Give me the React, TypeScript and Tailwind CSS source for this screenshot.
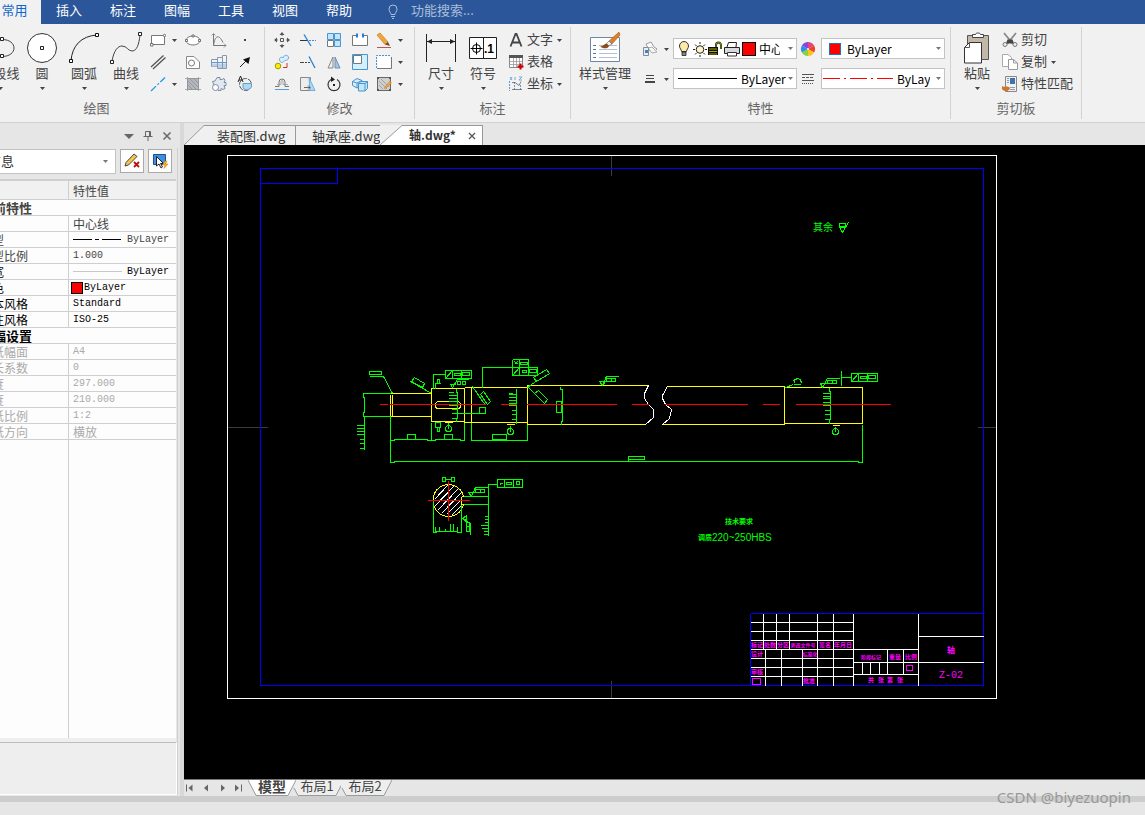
import type { ReactNode } from "react"

const menus = ["常用", "插入", "标注", "图幅", "工具", "视图", "帮助"]

type IconProps = { size?: number; children: ReactNode }

const Icon = ({ size = 16, children }: IconProps) => (
  <svg width={size} height={size} viewBox={`0 0 ${size} ${size}`} fill="none" stroke="#444" strokeWidth="1" className="shrink-0" aria-hidden="true">
    {children}
  </svg>
)

const Caret = ({ light = false }: { light?: boolean }) => (
  <svg width="5" height="3" viewBox="0 0 5 3" fill={light ? "#777" : "#444"} className="shrink-0" aria-hidden="true">
    <path d="M0 0H5L2.5 3Z" />
  </svg>
)

/* ---------- ribbon icons ---------- */

const PolylineIcon = () => (
  <Icon size={32}>
    <path d="M2 7.500H18C34 7.500 34 24.500 18 24.500H2" stroke="#444" />
    <g fill="#fff" stroke="#222"><path d="M16.500 5.500h3v3h-3zM16.500 22.500h3v3h-3z" /></g>
  </Icon>
)
const CircleIcon = () => (
  <Icon size={32}>
    <circle cx="16" cy="16" r="14.5" fill="#fff" stroke="#333" />
    <path d="M14.5 14.5h3v3h-3z" fill="#fff" stroke="#222" />
  </Icon>
)
const ArcIcon = () => (
  <Icon size={32}>
    <path d="M3 29C4 14 13 4 29 3" stroke="#222" />
    <g fill="#fff" stroke="#111"><path d="M1.5 27.5h3v3h-3zM27.5 1.500h3v3h-3z" /></g>
  </Icon>
)
const CurveIcon = () => (
  <Icon size={32}>
    <path d="M2 29C4 18 8 14 12 14C17 14 18 19 22 19C27 19 29 12 30 3" stroke="#444" />
    <g fill="#fff" stroke="#222"><path d="M0.500 28.500h3v3h-3zM28.500 0.500h3v3h-3z" /></g>
  </Icon>
)
const DimensionIcon = () => (
  <Icon size={32}>
    <path d="M1.500 2V30M30.500 2V30M2 9.500H30" stroke="#222" />
    <path d="M2 9.500l5-2.500v5zM30 9.500l-5-2.500v5z" fill="#222" stroke="none" />
  </Icon>
)
const SymbolIcon = () => (
  <Icon size={32}>
    <path d="M2.500 5.500H29.500V26.500H2.500ZM16.500 5.500V26.500" fill="#fff" stroke="#222" />
    <circle cx="9.500" cy="16.500" r="4" stroke="#000" />
    <path d="M3.500 16.500h12M9.500 10.500v12" stroke="#000" />
    <text x="17" y="21" fontSize="12" fontWeight="700" fill="#000" stroke="none" fontFamily="Liberation Sans, sans-serif">.1</text>
  </Icon>
)
const StyleIcon = () => (
  <Icon size={32}>
    <path d="M1.500 5.500h29v24h-29z" fill="#fff" stroke="#6f87a6" />
    <path d="M4 13.500h4M4 17.500h4M4 21.500h4M4 25.500h4" stroke="#5b7a9a" strokeDasharray="3 1" />
    <path d="M10 13.500h18M10 17.500h18M10 21.500h18M10 25.500h18" stroke="#b6c1d0" />
    <path d="M30 0L20 9L23 12L31 3Z" fill="#d9822b" stroke="#a55a18" strokeWidth=".6" />
    <path d="M20 9L23 12L20 14L17.500 11.500Z" fill="#eee" stroke="#555" strokeWidth=".6" />
    <path d="M17.500 11.500L20 14C19 17 14 17 11 14.500C14 14.500 15 12 17.500 11.500Z" fill="#8a4b1c" stroke="none" />
  </Icon>
)
const PasteIcon = () => (
  <Icon size={32}>
    <path d="M6.500 3.500h21v24h-21z" fill="#c3b7a8" stroke="#555" />
    <path d="M11.500 5.500V2.500H14.500C14.500 .5 19.500 .5 19.500 2.500H22.500V5.500Z" fill="#fff" stroke="#444" />
    <path d="M3.500 15.500L8.500 10.500H20.500V31H3.500Z" fill="#fff" stroke="#333" />
    <path d="M3.500 15.500H8.500V10.500" stroke="#555" />
  </Icon>
)

const RectIcon = () => (
  <Icon>
    <path d="M1.500 3.500h13v9h-13z" fill="#fff" stroke="#777" />
    <g fill="#fff" stroke="#555" strokeWidth=".8"><path d="M.5 11.500h2.500v2.500H.5z" /><circle cx="14.500" cy="3.500" r="1.200" /></g>
  </Icon>
)
const EllipseIcon = () => (
  <Icon>
    <ellipse cx="8" cy="8.500" rx="7" ry="4.500" fill="#fff" stroke="#777" />
    <g fill="#fff" stroke="#555" strokeWidth=".8"><path d="M7 3h2v2H7zM0.500 7.500h2v2h-2zM13.500 7.500h2v2h-2z" /></g>
  </Icon>
)
const FormulaIcon = () => (
  <Icon>
    <path d="M2.500 2V13.500H15" stroke="#777" />
    <path d="M2.500 13.500C4 3 8 2 12 10.500" stroke="#777" />
    <path d="M.5 3.500l2-2 2 2M13 11.500l2 2-2 2" stroke="#888" strokeWidth=".8" />
  </Icon>
)
const PointIcon = () => (
  <Icon><path d="M7 7h2v2H7z" fill="#444" stroke="none" /></Icon>
)
const ParallelIcon = () => (
  <Icon>
    <path d="M1 13L13.500 1.500M3 15L15.500 3.500" stroke="#555" strokeWidth="1.300" />
  </Icon>
)
const RegionIcon = () => (
  <Icon>
    <path d="M1.500 2.500H9L14.500 8V14.500H1.500Z" fill="#fff" stroke="#888" />
    <circle cx="6.500" cy="9" r="3" stroke="#777" />
  </Icon>
)
const BoltIcon = () => (
  <Icon>
    <path d="M.5 5.500h6v7h-6zM6.500 3.500h5v11h-5zM11.500 1.500h4v13h-4z" fill="#f2f4f7" stroke="#8b97a8" />
    <path d="M1 9.500h5v3h-5zM7 9.500h4v4.500h-4zM12 9.500h3v4.500h-3z" fill="#b9d3ec" stroke="none" />
    <path d="M0 8.500H16" stroke="#5a9bd5" />
  </Icon>
)
const LeaderIcon = () => (
  <Icon>
    <path d="M3 13L10 6" stroke="#222" />
    <path d="M13 3L11.500 10L6 5.500Z" fill="#111" stroke="none" />
  </Icon>
)
const CenterLineIcon = () => (
  <Icon><path d="M1 15L15 1.500" stroke="#1c9ae6" strokeWidth="1.300" strokeDasharray="7 2 2 2" /></Icon>
)
const HatchIcon = () => (
  <Icon>
    <path d="M2.500 2.500h11v11h-11z" fill="#b4b8be" stroke="#888" />
    <path d="M2.500 1v14M13.500 15V1M0 2.500h16M0 13.500h16" stroke="#999" strokeWidth=".8" />
    <path d="M3 9l4 4M3 5l8 8M5 3l8 8M9 3l4 4" stroke="#8a8f96" strokeWidth=".8" />
  </Icon>
)
const GearIcon = () => (
  <Icon>
    <path d="M6 1.500h3v2h2l2-1 1 2-1 2h2v3h-2l1 3-2 1-2-1v2H7L3 9L1.500 5.500L4 5Z" fill="#e2e8ef" stroke="#7f8da0" />
    <circle cx="4.500" cy="11.500" r="3" fill="#fff" stroke="#7f8da0" />
  </Icon>
)
const BlockIcon = () => (
  <Icon>
    <circle cx="8.500" cy="8.500" r="6" stroke="#555" strokeDasharray="5 1" />
    <path d="M6 7.500h8.500v3A5 5 0 0 1 6 12Z" fill="#a9dbf7" stroke="#6b9cc0" />
    <path d="M1 6L3.500 0L6 6M2 4h3" stroke="#222" />
  </Icon>
)
const MoveIcon = () => (
  <Icon>
    <path d="M6.500 6.500h3v3h-3z" stroke="#555" />
    <path d="M8 0l2.500 3h-5zM8 16l2.500-3h-5zM0 8l3-2.500v5zM16 8l-3-2.500v5z" fill="#555" stroke="none" />
    <path d="M8 3v1M8 12v1M3 8h1M12 8h1" stroke="#777" />
  </Icon>
)
const TrimIcon = () => (
  <Icon>
    <path d="M0 8.500H8" stroke="#333" />
    <path d="M9 8.500h7" stroke="#3a8fd8" strokeDasharray="2 1" />
    <path d="M4 2.500L11 14" stroke="#2b7fd0" strokeWidth="1.300" />
  </Icon>
)
const ArrayIcon = () => (
  <Icon>
    <path d="M1.500 1.500h6v6h-6zM8.500 1.500h6v6h-6zM8.500 8.500h6v6h-6z" fill="#bfe6fb" stroke="#4d93cc" />
    <path d="M1.500 8.500h6v6h-6z" fill="#fff" stroke="#777" />
  </Icon>
)
const BreakIcon = () => (
  <Icon>
    <path d="M5 3.500H.500V13.500h15V3.500H11" fill="#fff" stroke="#777" />
    <path d="M4 1.500h2v4H4zM10 1.500h2v4h-2z" fill="#2b7fd0" stroke="none" />
  </Icon>
)
const EraseIcon = () => (
  <Icon>
    <path d="M1 3L4 1L12 10L9 12.500Z" fill="#f2a53a" stroke="#c57a15" strokeWidth=".7" />
    <path d="M9 12.500L12 10L14 14Z" fill="#5a4a3a" stroke="none" />
    <path d="M1 15.500H15" stroke="#b55" />
  </Icon>
)
const CopyMoveIcon = () => (
  <Icon>
    <circle cx="4" cy="12" r="2.800" fill="#ffeb00" stroke="#a79a00" />
    <path d="M6 7C4 4 8 2 9 4C10 0 15 1 14.500 4C14 7 11 6 10 7C9 9 7 9 6 7Z" fill="#d6f0ff" stroke="#6fa9d6" />
    <path d="M9 13.500h4V9" stroke="#c33" />
  </Icon>
)
const ExtendIcon = () => (
  <Icon>
    <path d="M0 8.500h10" stroke="#444" strokeDasharray="4 1 2 1" />
    <path d="M9 2.500L15 14" stroke="#2b7fd0" strokeWidth="1.300" />
  </Icon>
)
const MirrorIcon = () => (
  <Icon>
    <path d="M7 3V14H2Z" fill="#eee" stroke="#888" />
    <path d="M9 3V14H14Z" fill="#9fc6ea" stroke="#6f8fb0" />
  </Icon>
)
const ScaleIcon = () => (
  <Icon>
    <path d="M.5 .5h15v15H.5z" fill="#d4effd" stroke="#4d93cc" />
    <path d="M1.500 1.500h8v8h-8z" fill="#fff" stroke="#777" />
  </Icon>
)
const StretchBoxIcon = () => (
  <Icon>
    <path d="M1.500 1.500h13v13h-13z" fill="#fff" stroke="none" />
    <path d="M15.500 3V14.500H1" stroke="#777" />
    <path d="M.5 14V1.500H14" stroke="#4d93cc" strokeDasharray="2 1" />
  </Icon>
)
const OffsetIcon = () => (
  <Icon>
    <path d="M1 13.500H15" stroke="#5a9bd5" />
    <path d="M1 10.500H5V6A3 3 0 0 1 11 6V10.500H15" stroke="#777" />
    <path d="M3 8.500H7V5.500A1 1 0 0 1 9 5.500V8.500H14" stroke="#999" strokeWidth=".8" />
  </Icon>
)
const StretchIcon = () => (
  <Icon>
    <path d="M.5 1.500h10v13H.5z" fill="#ececec" stroke="#888" />
    <path d="M9 1.500L15 14.500H10Z" fill="#a9dbf7" stroke="#6fb0de" />
    <path d="M4 11.500h6M8 9.500l2 2-2 2" stroke="#444" strokeWidth=".8" />
  </Icon>
)
const RotateIcon = () => (
  <Icon>
    <path d="M5 3.500A6 6 0 1 0 11 3.500" stroke="#333" strokeWidth="1.200" />
    <path d="M5 .5L9 3.500L5 6Z" fill="#222" stroke="none" />
    <path d="M7 8h2v2H7z" fill="#222" stroke="none" />
  </Icon>
)
const ExplodeIcon = () => (
  <Icon>
    <path d="M.5 5.500L5 2.500L10 4.500V9.500L5 12L.5 9.500Z" fill="#d4effd" stroke="#4d93cc" />
    <path d="M.5 5.500L5 7V12M5 7L10 4.500" stroke="#4d93cc" />
    <path d="M6.500 7.500L9 5.500H15.500V12.500L13 15H6.500Z" fill="#c4e6fa" stroke="#4d93cc" />
    <path d="M6.500 7.500H13V15M13 7.500L15.500 5.500" stroke="#4d93cc" />
  </Icon>
)
const HatchEditIcon = () => (
  <Icon>
    <path d="M1.500 1.500h13v13h-13z" fill="#cfcfcf" stroke="#666" />
    <path d="M1 1h2v2H1zM13 1h2v2h-2zM1 13h2v2H1zM13 13h2v2h-2z" fill="#555" stroke="none" />
    <path d="M3 9l4 4M3 5l8 8M5 3l8 8" stroke="#999" strokeWidth=".8" />
    <path d="M14 5L15.500 7L10 12L8.500 12.500L9 11Z" fill="#f2a53a" stroke="#b9781c" strokeWidth=".5" />
  </Icon>
)
const TextIcon = () => (
  <Icon><path d="M2.500 14.500L7.500 2H8.500L13.500 14.500M4.500 10.500h7" stroke="#444" strokeWidth="1.800" /></Icon>
)
const TableIcon = () => (
  <Icon>
    <path d="M1.500 1.500h13v12h-13z" fill="#fff" stroke="#888" />
    <path d="M1 1h14v3H1z" fill="#555" stroke="none" />
    <path d="M1.500 7.500h13M1.500 10.500h13M5.500 4v9M8.500 4v9M11.500 4v9" stroke="#999" strokeWidth=".8" />
    <path d="M12.500 9.500v6M9.500 12.500h6" stroke="#c00" strokeWidth="2" />
  </Icon>
)
const CoordIcon = () => (
  <Icon>
    <path d="M1.500 5v10M6.500 6v9M12.500 9v6" stroke="#5a9bd5" strokeDasharray="2 1" />
    <path d="M4 6.500h3l4 3 2-4M4 13.500h10" stroke="#666" strokeWidth=".8" />
    <path d="M2 1l2 3M4 1L2 4M7 1v3M11 1h3l-3 3h3" stroke="#5a9bd5" strokeWidth=".8" />
  </Icon>
)
const LayersIcon = () => (
  <Icon>
    <path d="M4 3L9 1L12 6L15 8L12 11L7 9Z" fill="#fff" stroke="#999" />
    <path d="M6 7L10 6L15 11L10 12Z" fill="#f6f6f6" stroke="#aaa" />
    <path d="M1.500 6.500h5v8h-5z" fill="#e8eef5" stroke="#7f8da0" />
    <path d="M3 9h3v3H3z" fill="#4a7fb5" stroke="none" />
  </Icon>
)
const LineWeightIcon = () => (
  <Icon><path d="M4 4.500h8" /><path d="M4 7.500h8" strokeWidth="1" /><path d="M3 11h10" strokeWidth="2" /></Icon>
)
const LineTypeIcon = () => (
  <Icon>
    <path d="M2 3.500h12M2 9.500h12" stroke="#555" />
    <path d="M2 6.500h12" stroke="#555" strokeDasharray="3 1" />
    <path d="M2 12.500h12" stroke="#555" strokeDasharray="1 1" />
  </Icon>
)
const ColorWheelIcon = () => (
  <Icon>
    <g stroke="none">
      <path d="M8 8V1A7 7 0 0 1 14.100 4.500Z" fill="#e0457b" />
      <path d="M8 8L14.100 4.500A7 7 0 0 1 14.100 11.500Z" fill="#f0402a" />
      <path d="M8 8L14.100 11.500A7 7 0 0 1 8 15Z" fill="#ffc21f" />
      <path d="M8 8V15A7 7 0 0 1 1.900 11.500Z" fill="#8bd13c" />
      <path d="M8 8L1.900 11.500A7 7 0 0 1 1.900 4.500Z" fill="#2f8fe8" />
      <path d="M8 8L1.900 4.500A7 7 0 0 1 8 1Z" fill="#8a45e0" />
      <circle cx="8" cy="8" r="1" fill="#f5e6f5" />
    </g>
  </Icon>
)
const CutIcon = () => (
  <Icon>
    <path d="M2 1L11 12M14 1L5 12" stroke="#888" strokeWidth="1.800" />
    <path d="M5.500 7.500h5l1.500 4h-8z" fill="#444" stroke="none" />
    <circle cx="3" cy="12.500" r="2" fill="#eee" stroke="#777" />
    <circle cx="13" cy="12.500" r="2" fill="#eee" stroke="#777" />
  </Icon>
)
const CopyIcon = () => (
  <Icon>
    <path d="M.5 .5H6L9.500 3.500V12.500H.5Z" fill="#fff" stroke="#aaa" />
    <path d="M6.500 5.500H11.500L15.500 9V15.500H6.500Z" fill="#fff" stroke="#999" />
    <path d="M11.500 5.500V9H15.500" stroke="#999" />
  </Icon>
)
const MatchIcon = () => (
  <Icon>
    <path d="M3.500 .5h11v15h-11z" fill="#eef2f7" stroke="#888" />
    <path d="M8 2h5v6H8z" fill="#3f73b0" stroke="none" />
    <path d="M5 2.500h2M5 4.500h2M5 6.500h2M8 11.500h5M8 13.500h5" stroke="#999" />
    <path d="M0 10C2 12 5 9 8 12C7 16 2 16 0 13Z" fill="#c9782c" stroke="none" />
  </Icon>
)

/* layer state icons inside the combo box */
const BulbStateIcon = () => (
  <Icon>
    <path d="M5.500 10.500C5.500 8.500 3.500 7.500 3.500 5A4.500 4.500 0 0 1 12.500 5C12.500 7.500 10.500 8.500 10.500 10.500Z" fill="#ffe9a6" stroke="#333" />
    <path d="M6 11h4v3.500H6z" fill="#888" stroke="#222" strokeWidth=".8" />
  </Icon>
)
const SunIcon = () => (
  <Icon>
    <circle cx="8" cy="8.500" r="3.800" fill="#fff2cc" stroke="#222" />
    <path d="M8 1v2M8 14v2M1 8.500h2M13 8.500h2M3 3.500l1.500 1.500M11.500 12l1.500 1.500M3 13.500L4.500 12M11.500 5L13 3.500" stroke="#222" />
  </Icon>
)
const UnlockIcon = () => (
  <Icon>
    <path d="M8 7V4A2.500 2.500 0 0 1 13 4V8" stroke="#222" strokeWidth="2" />
    <path d="M8 7V4A2.500 2.500 0 0 1 13 4V8" stroke="#aaa800" strokeWidth=".8" />
    <path d="M0 6h10v8H0z" fill="#111" stroke="none" />
    <path d="M1 8h8M1 10.500h8M1 13h8" stroke="#aaa800" />
  </Icon>
)
const PrinterIcon = () => (
  <Icon>
    <path d="M3 6L4.500 1.500H12.500L12 6" fill="#fff" stroke="#222" />
    <path d="M.5 6.500H15.500V12.500H.5Z" fill="#d6d9de" stroke="#222" />
    <path d="M3.500 11.500H12.500V15H3.500Z" fill="#fff" stroke="#333" />
  </Icon>
)

/* ---------- ribbon parts ---------- */

const BigButton = ({ label, icon, wide = false }: { label: string; icon: ReactNode; wide?: boolean }) => (
  <button type="button" className={`flex shrink-0 flex-col items-center pt-[5px] ${wide ? "w-[60px]" : "w-[42px]"}`}>
    {icon}
    <span className="mb-[5px] h-[18px] whitespace-nowrap leading-[18px]">{label}</span>
    <Caret />
  </button>
)

const SmallButton = ({ label, caret = false, children }: { label: string; caret?: boolean; children: ReactNode }) => (
  <button type="button" aria-label={label} className={`flex h-[22px] items-center gap-[6px] ${caret ? "justify-start pl-[3px]" : "justify-center"}`}>
    {children}
    {caret && <Caret />}
  </button>
)

const TextButton = ({ label, icon, caret = false }: { label: string; icon: ReactNode; caret?: boolean }) => (
  <button type="button" className="flex h-[22px] items-center gap-[3px] whitespace-nowrap">
    {icon}
    <span className="mr-[1px] pb-[2px] leading-5">{label}</span>
    {caret && <Caret />}
  </button>
)

const Group = ({ title, className, children }: { title: string; className: string; children: ReactNode }) => (
  <section className={`flex h-[92px] shrink-0 flex-col border-r border-[#d2d2d2] ${className}`}>
    <div className="flex h-[72px]">{children}</div>
    <h2 className="h-5 text-center leading-[18px] text-[#666]">{title}</h2>
  </section>
)

const Combo = ({ label, value, className, children }: { label: string; value: string; className: string; children?: ReactNode }) => (
  <div className="flex h-[21px] w-[124px] items-center border border-[#c3c3c3] bg-white pr-[3px]">
    {children}
    <select aria-label={label} className={`min-w-0 flex-1 appearance-none overflow-hidden bg-transparent text-xs leading-4 text-black ${className}`}>
      <option>{value}</option>
    </select>
    <Caret light />
  </div>
)

const Ribbon = () => (
  <div className="flex shrink-0 overflow-hidden border-b border-[#d2d2d2] bg-[#f1f1f1] pt-[3px] pb-[3px]">
    <Group title="绘图" className="-ml-[71px] w-[336px]">
      <div className="flex flex-1 justify-end pr-[6px]">
        <BigButton label="多段线" icon={<PolylineIcon />} />
        <BigButton label="圆" icon={<CircleIcon />} />
        <BigButton label="圆弧" icon={<ArcIcon />} />
        <BigButton label="曲线" icon={<CurveIcon />} />
        <div className="grid grid-cols-[33px_26px_26px_26px] content-start pt-[2px]">
          <SmallButton label="矩形" caret><RectIcon /></SmallButton>
          <SmallButton label="椭圆"><EllipseIcon /></SmallButton>
          <SmallButton label="公式曲线"><FormulaIcon /></SmallButton>
          <SmallButton label="点"><PointIcon /></SmallButton>
          <div className="pl-[3px]"><SmallButton label="平行线"><ParallelIcon /></SmallButton></div>
          <SmallButton label="轮廓"><RegionIcon /></SmallButton>
          <SmallButton label="孔轴"><BoltIcon /></SmallButton>
          <SmallButton label="箭头"><LeaderIcon /></SmallButton>
          <SmallButton label="中心线" caret><CenterLineIcon /></SmallButton>
          <SmallButton label="剖面线"><HatchIcon /></SmallButton>
          <SmallButton label="齿轮"><GearIcon /></SmallButton>
          <SmallButton label="块"><BlockIcon /></SmallButton>
        </div>
      </div>
    </Group>

    <Group title="修改" className="w-[150px]">
      <div className="grid grid-cols-[26px_26px_26px_26px_34px] content-start pt-[2px] pl-1">
        <SmallButton label="平移"><MoveIcon /></SmallButton>
        <SmallButton label="裁剪"><TrimIcon /></SmallButton>
        <SmallButton label="阵列"><ArrayIcon /></SmallButton>
        <SmallButton label="打断"><BreakIcon /></SmallButton>
        <SmallButton label="删除" caret><EraseIcon /></SmallButton>
        <SmallButton label="平移复制"><CopyMoveIcon /></SmallButton>
        <SmallButton label="延伸"><ExtendIcon /></SmallButton>
        <SmallButton label="镜像"><MirrorIcon /></SmallButton>
        <SmallButton label="缩放"><ScaleIcon /></SmallButton>
        <SmallButton label="过渡" caret><StretchBoxIcon /></SmallButton>
        <SmallButton label="等距线"><OffsetIcon /></SmallButton>
        <SmallButton label="拉伸"><StretchIcon /></SmallButton>
        <SmallButton label="旋转"><RotateIcon /></SmallButton>
        <SmallButton label="分解"><ExplodeIcon /></SmallButton>
        <SmallButton label="填充编辑" caret><HatchEditIcon /></SmallButton>
      </div>
    </Group>

    <Group title="标注" className="w-[156px]">
      <div className="flex pl-[5px]">
        <BigButton label="尺寸" icon={<DimensionIcon />} />
        <BigButton label="符号" icon={<SymbolIcon />} />
        <div className="flex flex-col pt-[2px] pl-1">
          <TextButton label="文字" icon={<TextIcon />} caret />
          <TextButton label="表格" icon={<TableIcon />} />
          <TextButton label="坐标" icon={<CoordIcon />} caret />
        </div>
      </div>
    </Group>

    <Group title="特性" className="w-[380px]">
      <div className="flex pl-1">
        <BigButton label="样式管理" icon={<StyleIcon />} wide />
        <div className="flex flex-col gap-2 pt-[11px] pl-1">
          <SmallButton label="图层" caret><LayersIcon /></SmallButton>
          <SmallButton label="线宽设置" caret><LineWeightIcon /></SmallButton>
        </div>
        <div className="flex flex-col gap-[9px] pt-[11px] pl-1">
          <Combo label="图层" value="中心线" className="ml-[3px] mr-2">
            <div className="flex shrink-0 items-center pl-[2px]">
              <BulbStateIcon />
              <SunIcon />
              <UnlockIcon />
              <PrinterIcon />
              <span className="ml-[2px] h-[14px] w-[14px] border border-black bg-[#f00]" />
            </div>
          </Combo>
          <Combo label="线宽" value="ByLayer" className="ml-1">
            <span className="ml-1 h-[1px] w-[59px] bg-black" />
          </Combo>
        </div>
        <div className="flex flex-col gap-2 pt-[11px] pl-[3px]">
          <SmallButton label="颜色设置"><ColorWheelIcon /></SmallButton>
          <SmallButton label="线型设置"><LineTypeIcon /></SmallButton>
        </div>
        <div className="flex flex-col gap-[9px] pt-[11px] pl-[5px]">
          <Combo label="颜色" value="ByLayer" className="ml-[6px]">
            <span className="ml-[7px] h-3 w-3 border border-[#1673c5] bg-[#f00]" />
          </Combo>
          <Combo label="线型" value="ByLayer" className="ml-1 mr-[6px]">
            <svg width="70" height="1" viewBox="0 0 70 1" className="ml-[1px] shrink-0" aria-hidden="true">
              <path d="M0 .5H70" stroke="#f00" strokeDasharray="17 4 2 4" />
            </svg>
          </Combo>
        </div>
      </div>
    </Group>

    <Group title="剪切板" className="w-[131px]">
      <div className="flex pl-[5px]">
        <BigButton label="粘贴" icon={<PasteIcon />} />
        <div className="flex flex-col pt-[2px] pl-1">
          <TextButton label="剪切" icon={<CutIcon />} />
          <TextButton label="复制" icon={<CopyIcon />} caret />
          <TextButton label="特性匹配" icon={<MatchIcon />} />
        </div>
      </div>
    </Group>
  </div>
)

/* ---------- property panel ---------- */

type Row = { label: string; value?: ReactNode; tone?: string; head?: boolean }

const mono = "block h-[15px] leading-[15px] font-['Liberation_Mono','Noto_Sans_CJK_SC',monospace] text-[10px]"

const rows: Row[] = [
  { label: "当前特性", head: true, tone: "text-[#444]" },
  { label: "层", value: "中心线", tone: "text-[#444]" },
  {
    label: "线型",
    tone: "text-[#444]",
    value: (
      <span className="flex items-center gap-[5px]">
        <svg width="49" height="1" viewBox="0 0 49 1" aria-hidden="true"><path d="M0 .5H49" stroke="#000" strokeDasharray="19 3 4 3" /></svg>
        <span className={mono}>ByLayer</span>
      </span>
    ),
  },
  { label: "线型比例", value: <span className={mono}>1.000</span>, tone: "text-[#444]" },
  {
    label: "线宽",
    tone: "text-black",
    value: (
      <span className="flex items-center gap-[5px]">
        <span className="h-[1px] w-[49px] bg-[#c8c8c8]" />
        <span className={mono}>ByLayer</span>
      </span>
    ),
  },
  {
    label: "颜色",
    tone: "text-black",
    value: (
      <span className="flex items-center gap-[1px]">
        <span className="-ml-[2px] h-3 w-3 border border-black bg-[#f00]" />
        <span className={mono}>ByLayer</span>
      </span>
    ),
  },
  { label: "文本风格", value: <span className={mono}>Standard</span>, tone: "text-black" },
  { label: "标注风格", value: <span className={mono}>ISO-25</span>, tone: "text-black" },
  { label: "图幅设置", head: true, tone: "text-black" },
  { label: "图纸幅面", value: <span className={mono}>A4</span>, tone: "text-[#aaa]" },
  { label: "加长系数", value: <span className={mono}>0</span>, tone: "text-[#aaa]" },
  { label: "长度", value: <span className={mono}>297.000</span>, tone: "text-[#aaa]" },
  { label: "宽度", value: <span className={mono}>210.000</span>, tone: "text-[#aaa]" },
  { label: "图纸比例", value: <span className={mono}>1:2</span>, tone: "text-[#aaa]" },
  { label: "图纸方向", value: "横放", tone: "text-[#aaa]" },
]

const PropertyPanel = () => (
  <aside className="flex w-[184px] shrink-0 flex-col overflow-hidden border-r-4 border-[#d8d8d8] bg-[#e6e6e6]">
    <div className="flex h-[25px] shrink-0 items-center justify-end gap-[7px] pr-[7px]">
      <button type="button" aria-label="菜单"><Icon size={12}><path d="M1 4H11L6 9Z" fill="#666" stroke="none" /></Icon></button>
      <button type="button" aria-label="固定"><Icon size={12}><path d="M3.500 1.500h5v5h-5zM7.500 1.500v5M1.500 6.500h9M6 7v4" stroke="#666" /></Icon></button>
      <button type="button" aria-label="关闭"><Icon size={12}><path d="M2.500 2.500l7 7M9.500 2.500l-7 7" stroke="#666" strokeWidth="1.500" /></Icon></button>
    </div>

    <div className="mr-[2px] mb-[1px] flex min-h-0 flex-1 flex-col border-r border-[#cfcfcf]">
      <div className="flex h-[31px] shrink-0 gap-1 pt-[1px]">
        <div className="-ml-5 flex h-[25px] w-[136px] items-center border border-[#c3c3c3] bg-white pr-[7px] pl-[7px]">
          <select aria-label="选择对象" className="flex-1 appearance-none bg-transparent pb-[2px] leading-5 text-[#333]">
            <option>信息</option>
          </select>
          <Caret light />
        </div>
        <button type="button" aria-label="清除选择" className="flex h-6 w-6 items-center justify-center border border-[#aaa] bg-[#fdfdfd]">
          <Icon>
            <path d="M1 13L2 9.500L10 1L13 3.500L4.500 12Z" fill="#f4c64a" stroke="#333" strokeWidth=".9" />
            <path d="M10 9l5 5M15 9l-5 5" stroke="#b11" strokeWidth="1.800" />
          </Icon>
        </button>
        <button type="button" aria-label="快速选择" className="flex h-6 w-6 items-center justify-center border border-[#aaa] bg-[#fdfdfd]">
          <Icon>
            <path d="M1.500 1.500h12v10h-12z" fill="#3f8fe0" stroke="#1f4f90" />
            <path d="M4.500 3.500V13L7 11L9 15L10.500 14L8.500 10.500H11.500Z" fill="#fff" stroke="#111" strokeWidth=".9" />
            <path d="M13 8L10.500 12H13L12 15.500L16 11H13.500L15 8Z" fill="#f9b52a" stroke="#c47a00" strokeWidth=".5" />
          </Icon>
        </button>
      </div>

      <table className="-ml-5 w-[196px] shrink-0 table-fixed border-separate border-spacing-0 border-t-2 border-[#cfcfcf] bg-[#fdfdfd] text-xs leading-[15px]">
        <colgroup>
          <col className="w-[89px]" />
          <col />
        </colgroup>
        <thead>
          <tr className="h-[19px] bg-[#f1f1f1] text-left text-[#444]">
            <th aria-label="特性名" className="border-r border-b border-[#cfcfcf] p-0 font-normal" />
            <th className="border-b border-[#cfcfcf] p-0 pl-1 font-normal">特性值</th>
          </tr>
        </thead>
        <tbody>
          {rows.map((row) =>
            row.head ? (
              <tr key={row.label} className="h-4">
                <th colSpan={2} className={`h-4 border-b border-[#cfcfcf] p-0 text-left text-[13px] font-bold ${row.tone}`}>{row.label}</th>
              </tr>
            ) : (
              <tr key={row.label} className={`h-4 ${row.tone}`}>
                <th className="h-4 border-r border-b border-[#cfcfcf] p-0 text-left font-normal whitespace-nowrap">{row.label}</th>
                <td className="h-4 border-b border-[#cfcfcf] p-0 pl-1 align-top">{row.value}</td>
              </tr>
            ),
          )}
        </tbody>
      </table>
      <div className="flex w-[176px] flex-1 bg-[#fdfdfd]">
        <div className="w-[69px] border-r border-[#cfcfcf]" />
      </div>
      <div className="h-[5px] w-[176px] shrink-0 border-b border-[#bdbdbd] bg-[#eee]" />
      <div className="h-[52px] shrink-0 border-r border-b border-white bg-[#eee]" />
    </div>
  </aside>
)

/* ---------- drawing ---------- */

const G = "#00ff00"
const Y = "#ffff00"
const M = "#ff00ff"

const Drawing = () => (
  <svg
    width="961"
    height="634"
    viewBox="184 145 961 634"
    className="block shrink-0"
    fill="none"
    strokeWidth="1"
    fontFamily="'Noto Sans CJK SC', sans-serif"
    role="img"
    aria-label="轴零件图"
  >
    <g transform="translate(.5 .5)" shapeRendering="crispEdges">
      {/* sheet frame */}
      <path d="M611 155V175M611 680V698M227 427H267M977 427H996" stroke="#3a3a3a" />
      <path d="M260 183H337V168" stroke="#00f" />
      <path d="M260 168H983V685H260Z" stroke="#00f" />
      <path d="M227 155H996V698H227Z" stroke="#fff" />

      {/* title block */}
      <path
        d="M750 622H853M750 631H853M750 640H853M750 649H918M750 658H853M750 667H853M750 676H853
           M763 613V649M776 613V649M789 613V649M817 613V685M833 613V685M853 613V685M765 649V685M781 649V685M802 649V685
           M853 662H918M853 674H918M887 649V674M903 649V674M862 662V674M870 662V674M879 662V674
           M918 613V685M918 636H983M918 662H983"
        stroke="#fff"
      />
      <path d="M750 613H983M750 613V685" stroke="#00f" />
      <path d="M752 678H760V684H752ZM906 665H912V670H906Z" stroke={M} />

      {/* shaft outline */}
      <path
        d="M390 394V416M392 394V416M390 393H431M390 416H431M431 388H464V421H431ZM464 387H527M464 422H527M464 387V422M471 387V422
           M648 385H527V424H645M667 386H784V424H662M784 387H862V423H784M444 422H452M506 424H514M832 425H839"
        stroke={Y}
      />
      <rect x="435" y="401" width="25" height="7" rx="3" stroke={Y} />
      <path d="M648 385L644 393V398L648 404L653 409V417L645 424M667 386L662 395V398L665 404L671 409L669 418L662 424" stroke="#fff" />

      {/* dimensions */}
      <path
        d="M390 416V462H394V461H858V462H862V424M390 440H394V439H427V440H435V439H460V440H464V422M431 422V440M471 422V440H527V424
           M407 439V434H415V439M444 439V434H452V439M492 439V434H506V439H492M628 461V456H644V459H628
           M390 393H363V397H364V412H363V416H390M364 416V449
           M356 425H364M356 428H364M356 431H364M356 434H364M359 439H364M359 443H364M359 448H364
           M369 371H381V374H369ZM369 376H383L392 393
           M414 377L424 383L422 387L411 381ZM410 381L431 393"
        stroke={G}
      />
      <path
        d="M445 370H471V378H445ZM452 370V378M461 370V378M445 378L452 370M454 373H460V375H454ZM462 372H469V375H462Z
           M445 374H433V388M437 379H439V383H437ZM435 388V383H440
           M450 384H455M450 384L452 387L457 379H468M457 381H460V384H457ZM462 381H465V384H462Z
           M456 388V392H457V418H456V421M448 392H453M448 395H457M448 398H457M448 401H457M448 405H457M451 409H457M451 413H485V407H479V413M451 418H456
           M483 391L490 401L487 404L480 394ZM472 386L485 405
           M482 387V367H512M512 359H528V375M512 359V375H537V367H512M519 359V375M512 375L519 367M514 363H517M520 362H527V364H520ZM522 370H526V372H522ZM529 369H536V372H529Z
           M546 369L549 373L536 381L533 377ZM527 387L538 379
           M538 390L547 399L544 403L534 393ZM528 387L544 403
           M516 388V423M508 393H512M508 394H516M508 397H516M508 400H516M508 403H516M508 405H516M511 410H516M511 414H516M511 419H516
           M556 401H561V412H556ZM560 386V389H562V421H561V424"
        stroke={G}
      />
      <path
        d="M435 422H440V427H435ZM437 427H439V431H437ZM448 422V428M510 425V431M835 426V431M514 361L517 364M514 364L517 361
           M599 381H605L602 385L599 381M602 385L606 376H618M606 378H611V381H606ZM611 378H615V381H611
           M785 387L793 384M793 384H800M795 383L793 380L797 378L800 379L801 383
           M820 383H826M820 383L822 387L827 378H839M827 380H836V383H827ZM832 380V383
           M841 370V385M841 377H851M851 373H877V381H851ZM858 373V381M867 373V381M851 381L858 373M860 376H866V378H860ZM868 375H875V378H868Z
           M829 387V391H830V419H829V423M822 393H830M822 396H830M822 398H830M822 402H830M822 405H830M824 410H830M824 414H830M824 419H830"
        stroke={G}
      />
      <g stroke={G}>
        <circle cx="448" cy="428" r="3" />
        <circle cx="510" cy="431" r="3" />
        <circle cx="835" cy="431" r="3" />
      </g>

      {/* keyway section */}
      <path
        d="M434 499L447 485M434 506L453 486M437 510L458 488M441 513L461 492M446 514L460 500M451 515L461 505"
        stroke="#fff"
      />
      <path d="M463 496A15.500 16 0 1 0 463 504M461 496H464M461 504H464M461 496V504" stroke={Y} />
      <path
        d="M433 500V532H436V531H457V532H461V504M435 531V526M439 531V526M445 531V528M450 531V523M453 531V523M457 531V526
           M442 477H445V481H442ZM451 477H454V481H451ZM445 479H451
           M463 496H488M463 504H488M488 535V484H497M497 479H522V487H497ZM504 479V487M513 479V487M506 482H511V484H506ZM516 481H519V484H516ZM499 483H502M500 482V484
           M468 492H474M468 492L471 496L475 487H487M475 489H484V492H475ZM480 489V492
           M484 516H488M484 519H488M484 522H488M480 525H488M481 528H488M483 531H488M483 534H488
           M462 518L466 515V520ZM466 522H469V531H466ZM466 526H469M470 522V534M464 520L470 523"
        stroke={G}
      />

      {/* axes */}
      <path
        d="M379 404H387M389 404H485M500 404H516M526 404H616M631 404H648M664 404H747M762 404H779M795 404H890M427 500H469M448 480V520"
        stroke="#f00"
      />

      {/* surface finish mark */}
      <path d="M839 223H845V226H839ZM839 227H845L842 232ZM842 232L848 222" stroke={G} />
    </g>

    <g fill={G}>
      <text x="813" y="231" fontSize="10">其余</text>
      <text x="739" y="524" fontSize="7" fontWeight="700" textAnchor="middle">技术要求</text>
      <text x="698" y="540" fontSize="7" fontWeight="700">调质</text>
      <text x="712" y="541" fontSize="10" fontFamily="Liberation Sans, sans-serif">220~250HBS</text>
    </g>
    <g fill={M} fontSize="6" fontWeight="700" textAnchor="middle">
      <text x="757" y="647">标记</text>
      <text x="770" y="647">处数</text>
      <text x="783" y="647">分区</text>
      <text x="803" y="647" fontSize="5">更改文件号</text>
      <text x="825" y="647">签名</text>
      <text x="843" y="647">年月日</text>
      <text x="757" y="656">设计</text>
      <text x="810" y="656" fontSize="5">标准化</text>
      <text x="757" y="674">审核</text>
      <text x="809" y="683">批准</text>
      <text x="871" y="659" fontSize="5">阶段标记</text>
      <text x="895" y="659">重量</text>
      <text x="911" y="659">比例</text>
      <text x="871" y="682">共</text>
      <text x="881" y="682">张</text>
      <text x="890" y="682">第</text>
      <text x="900" y="682">张</text>
      <text x="951" y="653" fontSize="8">轴</text>
      <text x="951" y="678" fontSize="10" fontWeight="400" fontFamily="Liberation Mono, monospace">Z-02</text>
    </g>
  </svg>
)

/* ---------- document area ---------- */

const Slope = ({ fill, w = 20 }: { fill: string; w?: number }) => (
  <svg width={w} height="20" viewBox={`0 0 ${w} 20`} className="shrink-0" aria-hidden="true">
    <path d={`M0 20L${w} .5V20Z`} fill={fill} />
    <path d={`M0 20L${w} .5`} stroke="#999" fill="none" />
  </svg>
)

const DocTabs = () => (
  <div role="tablist" className="flex h-[22px] shrink-0 items-end bg-[#e6e6e6] whitespace-nowrap text-[#333]">
    <Slope fill="#f0f0f0" />
    <button type="button" role="tab" className="h-5 w-[92px] border-t border-r border-[#999] bg-[#f0f0f0] pl-[13px] text-left leading-[16px]">装配图.dwg</button>
    <button type="button" role="tab" className="h-5 w-[84px] border-t border-[#999] bg-[#f0f0f0] pl-4 text-left leading-[16px]">轴承座.dwg</button>
    <div className="flex h-5 bg-[#f0f0f0]">
      <Slope fill="#fff" w={22} />
      <div className="flex h-5 w-[81px] items-center justify-between border-t border-r border-[#999] bg-white pr-[5px] pl-[7px]">
        <button type="button" role="tab" aria-selected="true" className="pb-[2px] text-xs leading-4 font-bold">轴.dwg*</button>
        <button type="button" aria-label="关闭标签"><Icon size={10}><path d="M2 2l6 6M8 2l-6 6" stroke="#555" strokeWidth="1.300" /></Icon></button>
      </div>
    </div>
  </div>
)

const LayoutTab = ({ label, active = false }: { label: string; active?: boolean }) => (
  <button type="button" role="tab" aria-selected={active} className={`-mr-[6px] flex h-4 shrink-0 ${active ? "relative z-10" : ""}`}>
    <svg width="8" height="16" viewBox="0 0 8 16" aria-hidden="true">
      <path d="M0 0L8 16V0Z" fill={active ? "#fff" : "#eee"} />
      <path d={active ? "M0 0L8 15.500" : "M4 8L8 15.500"} stroke="#999" fill="none" />
    </svg>
    <span className={`h-4 border-b border-[#999] text-center leading-[12px] ${active ? "w-8 bg-white text-[14px] font-bold" : "w-[38px] bg-[#eee]"}`}>{label}</span>
    <svg width="8" height="16" viewBox="0 0 8 16" aria-hidden="true">
      <path d="M8 0L0 16V0Z" fill={active ? "#fff" : "#eee"} />
      <path d="M8 0L0 15.500" stroke="#999" fill="none" />
    </svg>
  </button>
)

const LayoutTabs = () => (
  <div className="flex h-[17px] shrink-0 border-t border-[#777] bg-[#e6e6e6] text-[#444]">
    <div className="flex items-center gap-1">
      <button type="button" aria-label="首页"><Icon size={12}><path d="M2.500 2.500v7" stroke="#666" /><path d="M8.500 2.500v7l-4-3.500Z" fill="#666" stroke="none" /></Icon></button>
      <button type="button" aria-label="上一页"><Icon size={12}><path d="M8 2.500v7L4 6Z" fill="#666" stroke="none" /></Icon></button>
      <button type="button" aria-label="下一页"><Icon size={12}><path d="M5 2.500v7L9 6Z" fill="#666" stroke="none" /></Icon></button>
      <button type="button" aria-label="末页"><Icon size={12}><path d="M3 2.500v7L7 6Z" fill="#666" stroke="none" /><path d="M9.500 2.500v7" stroke="#666" /></Icon></button>
    </div>
    <div role="tablist" className="ml-1 flex">
      <LayoutTab label="模型" active />
      <LayoutTab label="布局1" />
      <LayoutTab label="布局2" />
    </div>
  </div>
)

const App = () => {
  return (
    <div className="relative flex h-screen flex-col overflow-hidden bg-[#e6e6e6] font-['Noto_Sans_CJK_SC',sans-serif] text-[13px] text-[#444]">
      <header className="flex h-6 shrink-0 items-center overflow-hidden bg-[#2b579a] text-white">
        <nav className="-ml-3 flex">
          {menus.map((menu, i) => (
            <button
              key={menu}
              type="button"
              className={i === 0 ? "mr-[1px] h-6 w-[53px] bg-[#f1f1f1] pb-1 text-[#1266cc]" : "h-6 w-[54px] pb-1"}
            >
              {menu}
            </button>
          ))}
        </nav>
        <label className="ml-[21px] flex items-center gap-3 text-[#a9bcd8]">
          <svg width="12" height="16" viewBox="0 0 12 16" fill="none" stroke="#a9bcd8" aria-hidden="true">
            <path d="M4 10.500C4 8.500 2 8 2 5A4 4 0 0 1 10 5C10 8 8 8.500 8 10.500ZM4 12.500H8M5 14.500H7" />
          </svg>
          <input type="text" aria-label="功能搜索" placeholder="功能搜索..." className="w-40 bg-transparent pb-1 leading-5 placeholder:text-[#a9bcd8]" />
        </label>
      </header>

      <Ribbon />

      <div className="flex min-h-0 flex-1">
        <PropertyPanel />
        <main className="flex min-w-0 flex-1 flex-col">
          <DocTabs />
          <div className="min-h-0 flex-1 overflow-hidden bg-black">
            <Drawing />
          </div>
          <LayoutTabs />
        </main>
      </div>

      <footer className="h-[19px] shrink-0 border-t-[6px] border-[#cdcdcd] bg-[#e6e6e6]" />
      <span className="absolute right-[14px] bottom-2 text-[15px] leading-5 text-[#999] font-['Noto_Sans',sans-serif]">CSDN @biyezuopin</span>
    </div>
  )
}

export default App
